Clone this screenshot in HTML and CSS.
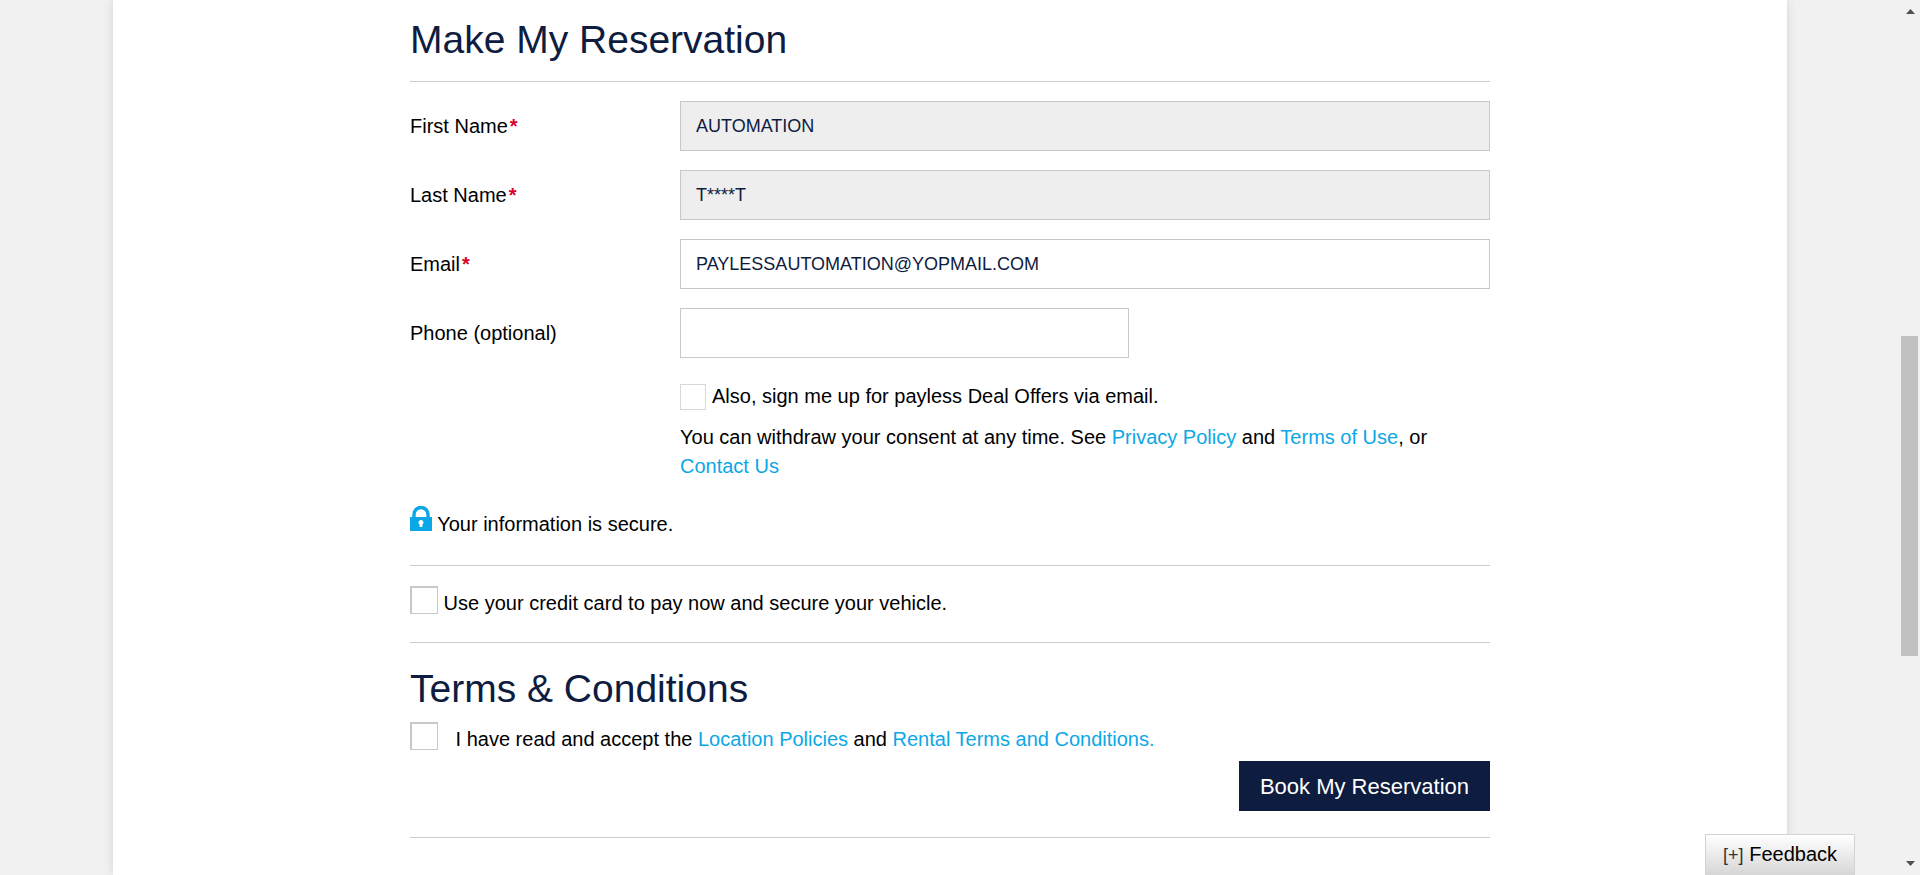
FILE: index.html
```html
<!DOCTYPE html>
<html lang="en">
<head>
<meta charset="utf-8">
<meta name="viewport" content="width=device-width, initial-scale=1">
<title>Make My Reservation</title>
<link rel="stylesheet" href="styles.css">
</head>
<body>
<div class="page">
  <main class="panel">
    <form class="content">
      <h2 class="heading heading-main">Make My Reservation</h2>
      <section class="fields">
        <div class="field">
          <label for="first">First Name<span class="required">*</span></label>
          <input class="text-box" id="first" type="text" value="AUTOMATION" readonly>
        </div>
        <div class="field">
          <label for="last">Last Name<span class="required">*</span></label>
          <input class="text-box" id="last" type="text" value="T****T" readonly>
        </div>
        <div class="field">
          <label for="email">Email<span class="required">*</span></label>
          <input class="text-box" id="email" type="email" value="PAYLESSAUTOMATION@YOPMAIL.COM">
        </div>
        <div class="field">
          <label for="phone">Phone (optional)</label>
          <input class="text-box text-box-short" id="phone" type="tel">
        </div>
      </section>
      <section class="consent">
        <div class="offers">
          <input class="check check-small" id="offers" type="checkbox">
          <label for="offers">Also, sign me up for payless Deal Offers via email.</label>
        </div>
        <p class="consent-text">You can withdraw your consent at any time. See <a href="#">Privacy Policy</a> and <a href="#">Terms of Use</a>, or <a href="#">Contact Us</a></p>
      </section>
      <p class="secure">
        <svg class="lock" viewBox="0 0 22 25" aria-hidden="true">
          <path d="M4 13V8.500a7 7 0 0 1 14 0V13" fill="none" stroke="#0ca7e6" stroke-width="3.400"/>
          <path d="M0 11h22v14H0z" fill="#0ca7e6"/>
          <path d="M11 14a2.500 2.500 0 0 1 1.400 4.600V21h-2.800v-2.400A2.500 2.500 0 0 1 11 14z" fill="#fff"/>
        </svg>
        Your information is secure.
      </p>
      <div class="pay">
        <input class="check" id="pay" type="checkbox">
        <label for="pay">Use your credit card to pay now and secure your vehicle.</label>
      </div>
      <section class="terms">
        <h2 class="heading">Terms &amp; Conditions</h2>
        <div class="accept">
          <input class="check check-spaced" id="accept" type="checkbox">
          <label for="accept">I have read and accept the <a href="#">Location Policies</a> and <a href="#">Rental Terms and Conditions.</a></label>
        </div>
        <div class="actions">
          <button class="book" type="button">Book My Reservation</button>
        </div>
      </section>
    </form>
  </main>
</div>
<div class="scrollbar" aria-hidden="true">
  <svg class="arrow" viewBox="0 0 9 5"><path d="M0 5L4.500 0L9 5z" fill="#505050"/></svg>
  <div class="thumb"></div>
  <svg class="arrow" viewBox="0 0 9 5"><path d="M0 0h9L4.500 5z" fill="#505050"/></svg>
</div>
<button class="feedback" type="button"><span class="plus">[+]</span> Feedback</button>
</body>
</html>
```
FILE: styles.css
```css
* {
  box-sizing: border-box;
}

body {
  margin: 0;
  background: #f1f1f1;
  color: #000;
  font: 20px/29px "Liberation Sans", Arial, sans-serif;
  overflow: hidden;
}

.page {
  margin-right: 20px;
  padding: 0 113px;
}

.panel {
  min-height: 100vh;
  background: #fff;
  box-shadow: 0 0 10px rgba(0, 0, 0, 0.12);
}

.content {
  max-width: 1080px;
  margin: 0 auto;
}

.heading {
  margin: 0;
  color: #0e1c3f;
  font-size: 39px;
  font-weight: 400;
  line-height: 46px;
}

.heading-main {
  padding: 17px 0 18px;
  border-bottom: 1px solid #ccc;
}

a {
  color: #0ca7e6;
  text-decoration: none;
}

.fields {
  display: grid;
  gap: 19px;
  padding-top: 19px;
}

.field {
  display: grid;
  grid-template-columns: 25% 75%;
  align-items: center;
}

.required {
  margin-left: 2px;
  color: #d9002b;
  font-weight: 700;
}

.text-box {
  width: 100%;
  height: 50px;
  padding: 0 15px;
  border: 1px solid #c8c8c8;
  border-radius: 0;
  background: #fff;
  color: #0e1c3f;
  font: inherit;
  font-size: 18px;
}

.text-box:read-only {
  background: #eee;
}

.text-box-short {
  width: 449px;
  max-width: 100%;
}

.consent {
  margin-left: 25%;
  padding-top: 24px;
}

.offers {
  display: flex;
  align-items: center;
  gap: 6px;
}

.check {
  appearance: none;
  width: 28px;
  height: 28px;
  margin: 0;
  border: solid #c8c8c8;
  border-width: 2px 1px 1px 2px;
  background: #fff;
  vertical-align: -4px;
}

.check-small {
  width: 26px;
  height: 26px;
  border: 1px solid #d8d8d8;
}

.check-spaced {
  margin-right: 12px;
}

.consent-text {
  margin: 12px 0 0;
}

.secure {
  margin: 25px 0 0;
  padding-bottom: 26px;
  border-bottom: 1px solid #ccc;
}

.lock {
  width: 22px;
  height: 25px;
}

.pay {
  padding: 20px 0 24px;
  border-bottom: 1px solid #ccc;
}

.terms {
  padding: 23px 0 26px;
  border-bottom: 1px solid #ccc;
}

.accept {
  padding: 10px 0 7px;
}

.actions {
  display: flex;
  justify-content: flex-end;
}

.book {
  height: 50px;
  padding: 0 21px;
  border: 0;
  background: #0e1c3f;
  color: #fff;
  font: inherit;
  font-size: 22px;
}

.scrollbar {
  position: fixed;
  top: 0;
  right: 0;
  bottom: 0;
  width: 20px;
  padding: 9px 0;
  display: flex;
  flex-direction: column;
  align-items: center;
  justify-content: space-between;
  background: #f1f1f1;
}

.arrow {
  width: 9px;
  height: 5px;
}

.thumb {
  position: absolute;
  top: 38.4%;
  left: 1px;
  width: 17px;
  height: 320px;
  background: #c1c1c1;
}

.feedback {
  position: fixed;
  right: 65px;
  bottom: 0;
  height: 41px;
  padding: 0 17px;
  border: 1px solid #d3d3d3;
  border-bottom: 0;
  background: linear-gradient(#fff, #d6d6d6);
  color: #000;
  font: inherit;
}

.plus {
  font-size: 18px;
  color: #333;
}
```
